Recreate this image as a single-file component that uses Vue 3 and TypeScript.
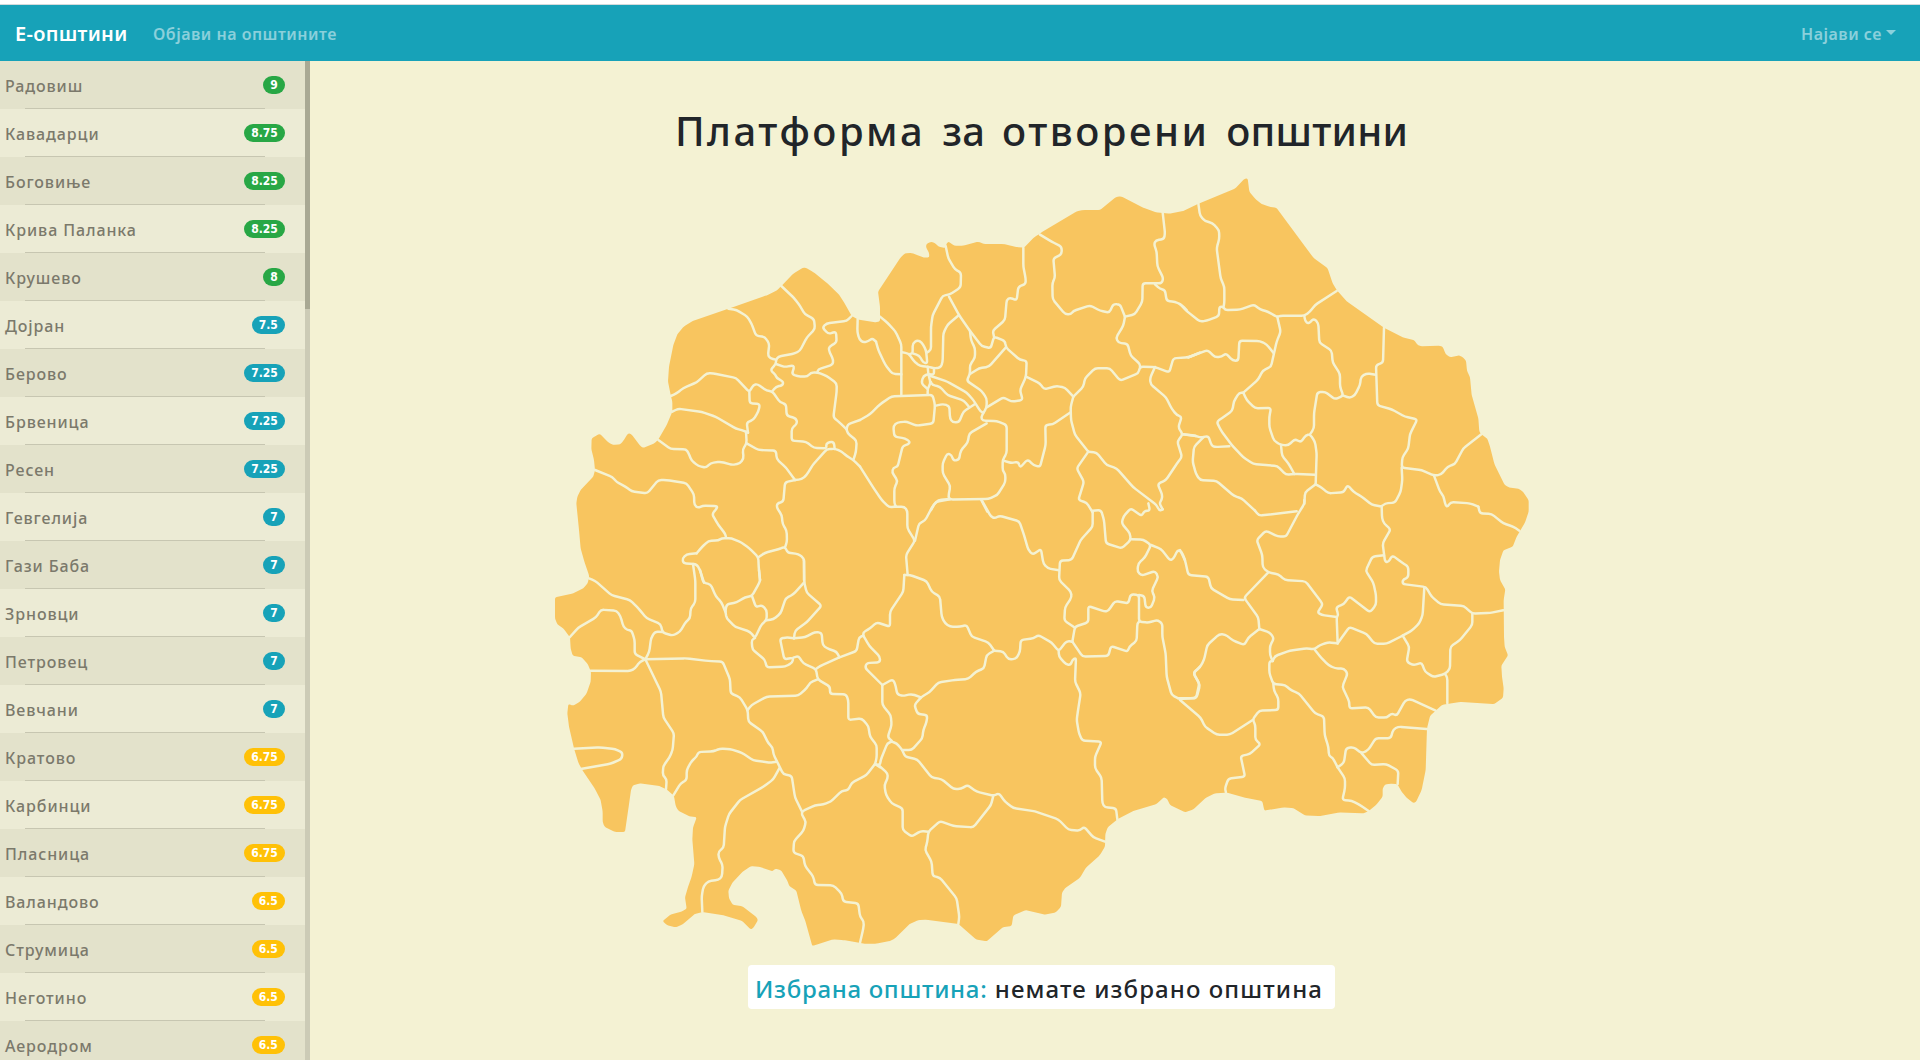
<script setup lang="ts">
interface Municipality {
  name: string
  score: number
}

interface Sheet {
  x: number
  y: number
  lines: string[]
}

const municipalities: Municipality[] = [
  { name: 'Радовиш', score: 9 },
  { name: 'Кавадарци', score: 8.75 },
  { name: 'Боговиње', score: 8.25 },
  { name: 'Крива Паланка', score: 8.25 },
  { name: 'Крушево', score: 8 },
  { name: 'Дојран', score: 7.5 },
  { name: 'Берово', score: 7.25 },
  { name: 'Брвеница', score: 7.25 },
  { name: 'Ресен', score: 7.25 },
  { name: 'Гевгелија', score: 7 },
  { name: 'Гази Баба', score: 7 },
  { name: 'Зрновци', score: 7 },
  { name: 'Петровец', score: 7 },
  { name: 'Вевчани', score: 7 },
  { name: 'Кратово', score: 6.75 },
  { name: 'Карбинци', score: 6.75 },
  { name: 'Пласница', score: 6.75 },
  { name: 'Валандово', score: 6.5 },
  { name: 'Струмица', score: 6.5 },
  { name: 'Неготино', score: 6.5 },
  { name: 'Аеродром', score: 6.5 },
]

function level(score: number): string {
  if (score >= 8) return 'success'
  if (score >= 7) return 'info'
  return 'warning'
}

// Map geometry is kept in sheets, each with its own origin, in thirds of a pixel.
type Point = [number, number]

function points(text: string, ox: number, oy: number): Point[] {
  return text.trim().split(/\s+/).map((pair) => {
    const [x, y] = pair.split(',').map(Number)
    return [x + ox, y + oy] as Point
  })
}

// Joins points with slightly rounded corners.
function toPath(pts: Point[], closed: boolean, radius: number): string {
  const n = pts.length
  const toward = (a: Point, b: Point): Point => {
    const d = Math.hypot(b[0] - a[0], b[1] - a[1]) || 1
    const t = Math.min(radius, d / 2) / d
    return [a[0] + (b[0] - a[0]) * t, a[1] + (b[1] - a[1]) * t]
  }
  const f = (p: Point): string => `${p[0].toFixed(1)} ${p[1].toFixed(1)}`
  let d = ''
  for (let i = 0; i < n; i++) {
    const p = pts[i]
    if (!closed && (i === 0 || i === n - 1)) {
      d += `${i === 0 ? 'M' : 'L'}${f(p)}`
      continue
    }
    const before = toward(p, pts[(i - 1 + n) % n])
    const after = toward(p, pts[(i + 1) % n])
    d += `${i === 0 ? 'M' : 'L'}${f(before)}Q${f(p)} ${f(after)}`
  }
  return closed ? d + 'Z' : d
}

const outlineParts: [number, number, string][] = [
  [1620, 1680, '45,112 100,100 130,85 143,70 147,52'],
  [1620, 720, '147,1005 133,965 122,925 117,870 109,790 112,770 122,750 160,710 165,690 162,660 154,627 155,595 179,581 205,607 220,615 240,613 250,603 262,583 268,579 276,585 300,617 310,624 345,609 355,598 380,555 397,515 397,485 392,465 384,425 387,380 400,315 412,283 432,259 460,242 565,206 680,166 710,152 728,134 760,101 788,84 797,83 820,96 860,128 898,165 915,192 935,228 953,238'],
  [2580, 510, '45,457 60,454 60,410 54,365 122,262 135,250 155,249 192,263 208,262 207,248 198,232 199,222 213,215 225,219 236,230 256,234 260,220 266,215 283,227 310,227 355,215 371,222 430,222 470,231 492,233 523,201 535,194 543,188 650,124 670,120 720,120 768,81 783,79 850,113 888,127 930,131 970,123'],
  [3540, 510, '58,100 165,56 194,26 203,25 208,65 225,86 245,102 267,110 289,113 400,263 443,295 458,340 470,360 500,394 612,473 668,502 702,510 712,524 722,529 780,527 788,530 797,552 810,562 838,556 850,563 858,572 861,602 870,622 875,675 895,745 898,785 904,793 922,806 930,830 943,882 974,945 988,953 1015,956 1027,963 1046,990'],
  [3540, 1440, '1046,95 1035,128 1010,170 998,200 970,211 960,240 957,275 960,300 976,328 971,360 972,470 974,500 984,526 964,557 966,590 971,625 969,653 943,672 840,666 787,674 750,708 741,745 737,870 725,930 708,966 700,969 680,953 665,935 652,912 630,911 615,914 608,925 608,950 590,973 566,993 550,1000 478,997 420,1008 375,1006 340,984 310,982 253,992 247,963 195,953 140,938 105,940 78,953 40,988 15,997'],
  [2580, 1440, '930,975 922,958 912,951 890,972 820,993 772,1018 743,1042 736,1062 735,1100 720,1125 678,1163 660,1193 615,1225 606,1238 603,1280 588,1297 555,1304 497,1290 460,1306 455,1338 428,1342 380,1384 348,1378 295,1332 200,1319 175,1320 148,1333 105,1375 90,1383 50,1391 15,1391'],
  [1620, 1680, '975,1151 910,1140 880,1138 817,1158 795,1080 784,1053 769,992 748,978 742,962 723,930 705,926 698,934 660,921 633,918 607,936 577,968 565,992 567,1015 578,1034 607,1039 648,1070 654,1080 640,1104 632,1108 607,1083 550,1066 487,1056 463,1063 428,1093 407,1102 380,1095 368,1083 393,1063 425,1055 440,1046 435,1012 445,978 455,950 463,912 457,838 459,803 470,772 448,769 415,752 407,738 402,708 380,688 358,678 298,670 278,677 273,690 266,740 255,816 225,816 193,800 188,785 188,755 182,720 165,687 127,630 115,608 102,565 87,500 82,460 85,432 100,437 120,425 140,400 152,365 153,335 143,312 125,292 98,287 92,265 90,232 70,205 52,193 45,175'],
]

const outline = toPath(outlineParts.flatMap(([x, y, t]) => points(t, x, y)), true, 5)

const sheets: Sheet[] = [
  {
    x: 1620,
    y: 720,
    lines: [
      '565,206 590,210 622,230 635,252 648,287 675,291 688,312 684,345 690,355 708,359',
      '724,138 763,175 780,198 795,223 822,237 825,267 800,293 780,332 765,340 715,350 708,359 708,372 691,390 707,405 710,414 730,425 728,436 708,440 697,454',
      '708,372 735,381 760,376 762,385 755,402 772,409 802,410 812,398 832,397 860,408 890,430 890,455 880,532 898,547 920,568',
      '832,397 835,388 878,374 880,360 866,330 868,320 890,307 888,275 865,282 847,262 860,250 920,243 935,228',
      '953,238 952,275 958,298 970,308 985,303 997,295 1008,305',
      '392,468 410,460 430,444 470,427 500,400 520,400 588,414 628,456 640,435 652,432 680,452 697,454 720,487 738,492 740,527 768,535 772,550 755,565 755,602 798,605 822,624 860,625 858,612 870,605 882,607 884,627',
      '628,456 629,490 660,492 655,515 640,540 620,547 624,578',
      '397,515 415,506 485,516 527,530 588,566 605,570 624,578',
      '618,575 620,610 608,628 611,655 600,670 577,675 542,665 512,669 498,683 475,678 455,662 445,638 438,628 392,627 355,600',
      '620,610 655,630 708,632 710,657 738,683 765,720',
      '765,720 735,727 730,785 712,790 710,802 725,825 728,852 740,872 741,905 735,922',
      '765,720 785,718 800,705 818,675 860,628 885,626 905,635 920,648 940,660 960,680',
      '920,568 923,553 960,540',
      '920,568 923,580 950,602 948,635 940,660',
      '165,690 217,711 230,726 257,740 275,754 322,760 355,720 380,720 440,730 462,763 463,795 474,804 488,797 532,798 530,806 516,822 535,855 556,882 558,892',
      '470,940 485,922 505,903 535,901 545,895 575,895 605,908 628,925 655,952 656,980 660,1020',
      '655,952 675,938 715,928 735,920 743,938 775,942 792,955 792,1020',
      '470,940 440,943 427,955 430,970 470,973 480,990 492,1028',
    ],
  },
  {
    x: 1620,
    y: 1680,
    lines: [
      '459,12 466,62 466,127 452,145 450,175 438,185 420,215 398,227 368,218 362,192 320,175 295,145 270,120 215,106 165,62 147,55',
      '368,216 345,215 333,235 328,275 316,298',
      '480,30 490,68 512,73 527,108 545,128 556,155',
      '660,60 658,68 636,108 615,112 590,127 560,133 556,155 560,175 585,200 630,215 645,234 665,192 680,181 680,150 665,135 648,142 636,108',
      '680,181 700,178 722,160 737,115 760,103 792,68',
      '792,0 793,68 800,98 845,137 800,187 765,212 762,235',
      '660,60 657,30',
      '762,235 740,232 720,236 727,270 733,298 760,293 757,308 735,320 680,322 675,300 637,268 635,240 645,234',
      '762,235 795,232 825,216 845,218 848,255 860,265 890,275 898,292',
      '760,293 775,288 790,310 828,327 833,358 870,380 870,402 918,403 925,420 925,480 965,475 985,498 990,530 1010,555 1010,595 1005,612',
      '828,327 840,318 898,292 950,273 957,232 970,227',
      '833,358 810,368 800,385 775,407 680,410 635,435 623,450',
      '316,298 440,295 505,303 548,305 570,358 572,400 600,412 623,450 625,485 668,515 685,550 698,562 700,582 730,643 755,647 765,712 785,753',
      '316,298 305,292 284,282 284,240 275,212 262,210 250,200 242,170 230,152 183,149 168,172 115,203 87,234',
      '316,298 300,305 285,325 272,333 152,332',
      '316,298 363,395 370,472 402,520 398,570 388,593 370,618 368,645 380,658 378,688',
      '102,566 180,562 225,567 248,578 245,597 212,611 122,627',
      '400,706 422,670 440,660 440,630 455,603 470,590 475,576 520,574 540,566 570,567 605,578 640,601 690,608 710,605',
      '718,625 700,658 672,679 600,720 567,762 555,800 551,863 535,875 536,893 548,915 546,950 535,960 505,963 490,980 485,1010 487,1056',
      '1005,612 980,645 935,668 925,690 905,693 872,725 850,733 825,736 787,753 785,763 798,785 790,813 762,843 760,878 790,888 795,918 820,950 825,975 880,976 905,1000 910,1025 955,1030 960,1070 972,1085 970,1105 960,1148',
      '1005,612 1020,622',
    ],
  },
  {
    x: 2580,
    y: 510,
    lines: [
      '48,515 55,540 75,583 97,612 124,613',
      '60,440 82,458 107,485 124,523 124,674',
      '0,750 30,733 60,703 95,679 218,675 225,705 220,760 170,767 140,755 112,757 100,768 103,800 135,805 150,815 145,823 128,828 113,890 100,893 96,907 113,932 103,955 103,1000 108,1010',
      '126,547 145,550 165,577 180,588 205,590 222,595 242,593 248,575 250,490 262,465 297,435',
      '150,552 158,550 158,520 172,510 185,517 198,540 202,580 190,578 178,557 158,550',
      '200,548 213,540 213,470 218,435 248,377 270,373 302,352 303,308 285,298 265,265 257,228',
      '267,380 297,435 330,483 365,528 392,535 402,500 435,513 438,533 480,570 500,572 498,620 480,660 488,690 455,695 430,682 380,712',
      '402,500 398,482 435,450 440,390 450,383 470,391 475,350 497,342 497,325 490,290 490,233',
      '330,483 333,510 345,535 345,563 330,585 330,612 320,632 365,663 380,685 380,712 363,742 368,752 410,753 440,765 440,850 428,870 428,902 436,912 436,937 412,975 385,987 270,989 265,980 271,948 248,910 248,880 262,850 275,855 280,872 297,870 302,842 323,818 328,790 380,760',
      '330,612 357,595 387,590 437,533',
      '203,590 205,612 212,640 203,655 203,672',
      '222,597 222,615 205,612 190,618 184,640 203,657',
      '212,618 262,635 320,668 340,690 362,725 370,728',
      '212,635 217,645 240,650 262,675 312,692 328,712',
      '345,702 310,725 297,757 278,757 270,745 268,708 250,702 228,707',
      '498,620 540,640 552,658 590,648 615,653 640,680',
      '640,680 670,650 675,625 705,595 750,595 780,632 835,610 840,590 885,591 928,607 940,565 985,562 1020,548',
      '640,680 632,710 633,750 645,795 685,845',
      '632,727 578,763 556,765 557,825 540,891 520,885 503,868 480,893 475,875 455,879 430,872',
      '885,591 870,625 872,643 918,682 935,716 950,735 965,740 955,772 968,793 952,815 966,860 950,882 918,930 893,942 907,975 905,990 898,1000 908,1018',
      '968,793 1008,798',
      '685,845 650,895 672,935 655,990 680,998 698,1027',
      '685,845 710,848 740,885 770,895 820,952 890,1005 898,1022 908,1018',
      '540,194 575,215 605,230 605,253 580,265 585,322 577,340 578,388 615,432 632,433 640,423 690,406 720,422 748,428 760,402 780,403 795,440',
      '795,440 825,433 847,395 848,340 905,340 910,325 892,288 890,245 882,222 888,211 912,207 915,190 908,127',
      '885,343 900,357 915,360 920,393 945,395 965,405 980,420',
      '795,440 790,467 768,503 775,518 803,522 812,557 840,582 840,592',
      '363,988 382,1025',
      '270,988 228,995 213,1020',
      '0,890 40,953 65,990 88,1012 103,1010',
    ],
  },
  {
    x: 3540,
    y: 510,
    lines: [
      '55,100 60,137 75,153 97,159 117,180 118,205 110,235 122,325 133,350 133,400 130,412',
      '0,402 20,423 60,455 80,452 117,438 118,410 130,410 135,420 180,419 222,404 240,418 263,425 292,441 300,437 373,437 390,425 405,405 470,363',
      '373,437 375,452 385,462 402,445 415,460 418,518 455,542 458,577 480,612 480,650 490,677 465,688 435,665 412,667 402,730 402,775 390,793',
      '490,677 510,684 525,675 540,645 543,620 560,610 587,614',
      '292,441 302,485 290,515 273,590 248,602 235,628 190,668',
      '25,562 83,540 105,562 125,560 138,550 158,572 175,572 178,512 240,513 260,523 280,548',
      '60,548 25,562',
      '190,668 178,668 162,693 157,722 135,738 110,755 122,780 155,825 190,862 220,882 292,888 318,914 343,912 405,914',
      '190,668 200,690 225,715 273,714 268,740 268,772 282,812 303,825 325,826 345,807 362,817 378,795 390,793 405,815 410,850 407,943',
      '303,825 306,857 325,880 343,912',
      '8,793 45,797 62,803 85,798 95,827 105,831 148,829',
      '70,802 42,830 38,875 48,912 60,930 110,933 162,978 185,985 225,1022',
      '407,943 375,967 373,1002',
      '407,943 425,953 445,970 490,967 503,945 520,965 545,980 575,1004 605,1010 615,1000 645,998 662,965 667,930 665,893',
      '612,473 609,578 588,585 592,706 635,718 675,740 712,748 690,792 685,835 667,862 665,893 725,900 762,917 783,914 803,890 825,882 850,835 904,793',
      '762,917 780,965 790,978 797,1007 803,1010 812,996 870,1000 895,1010',
    ],
  },
  {
    x: 3540,
    y: 1440,
    lines: [
      '605,78 606,115 612,130 632,148 608,190 615,245 625,247 637,226 665,247 685,260 685,292 668,300 668,312 738,321 755,350 782,373 852,378 877,401 930,399 970,391',
      '225,92 237,107 350,94',
      '373,60 373,72 355,100 318,170 293,169 257,152 230,180 247,225 248,262 265,277 295,283 315,300 377,304 427,370 425,380 412,397 425,405 470,411',
      '265,277 192,353 235,412 238,447',
      '0,210 15,240 25,285 85,290 93,325 150,358 190,360',
      '238,447 205,473 193,495 160,482 135,463 118,462 82,495 72,540 60,562 40,578 60,615 50,653 0,657',
      '0,660 62,713 75,740 110,764 150,764 218,720',
      '238,447 270,458 282,475 270,497 270,525 278,543',
      '278,543 268,545 268,580 280,612 315,615 335,632 357,640 405,700 432,710 434,765 445,800 447,828 458,833 473,862',
      '278,543 285,528 330,512 380,505 403,508 420,495 445,487 473,490',
      '403,508 425,535 445,555 465,565 492,566 503,580 487,620 508,665 508,685 565,682 587,712 620,713 635,700 650,707 675,662 690,657 767,692',
      '473,490 470,411 475,405 468,382 492,372 508,349 570,397 588,375 588,345 580,308 557,272 577,230 612,226',
      '473,490 508,441 560,462 583,491 620,491 668,467 695,452 718,430 728,405 733,322',
      '668,467 688,500 680,545 700,556 725,548 735,575 760,591 795,582 810,567 811,500 840,480 877,435 877,401',
      '795,582 802,592 802,670',
      '280,612 282,632 295,655 295,690 238,692 218,718 226,735 226,780 242,792 210,822 182,828 195,890 145,896 135,925 138,938',
      '473,862 492,848 498,805 520,801 545,820 565,810 587,775 632,775 640,748 655,740 740,747',
      '473,862 495,895 495,925 487,960 515,962 540,975 566,993',
      '545,820 575,855 618,852 655,872 653,912',
      '895,80 900,100 935,102 970,130 1000,140 1018,152',
    ],
  },
  {
    x: 2580,
    y: 1440,
    lines: [
      '10,467 10,457 30,445 50,427 90,440 90,395 130,335 133,285',
      '10,467 28,498 60,530 60,547 20,549 15,563 67,615',
      '103,80 133,80 142,92 142,145 165,182 138,225 143,285',
      '165,182 177,130 195,122 220,75 235,60 270,57',
      '365,60 393,110 405,115 418,107 478,124 492,165 505,210 518,224 543,207 550,250 563,265 597,271',
      '133,285 150,285 200,303 215,335 240,350 245,410 255,430 270,440 300,440 320,435 335,470 385,487 403,512',
      '403,512 430,515 445,538 468,537 480,515 482,480 520,475 535,465 575,488 596,513 620,483 637,485',
      '596,513 597,530 618,553 632,555 637,540 648,533 645,605 662,640 655,685 650,720 657,760 667,782 725,785 705,830 705,865 725,893 727,970 735,982 768,985 772,1018',
      '403,512 380,525 372,565 348,575 325,597 285,600 235,607 208,637 185,650 163,675 173,702 202,705 200,725 190,750 187,775 155,810 127,810',
      '67,615 98,598 105,610 112,643 128,648 155,642 183,652',
      '67,615 67,675 92,705 95,735 83,772 95,782',
      '95,785 110,790 127,810 135,830 172,838 215,893 245,897 280,927 303,927 322,915 350,935 400,947 417,940 435,965 460,984 525,994 595,1018 625,1049 660,1052 672,1040 700,1072 735,1085',
      '95,785 82,790 62,840 60,855 47,853',
      '55,855 83,880 83,895 73,915 78,945 95,970 128,985 128,1050 155,1070 182,1053 205,1055',
      '400,947 393,975 340,1042 280,1038 240,1023 205,1055 202,1085 195,1110 215,1145 218,1188 240,1193 290,1255 298,1310 295,1332',
      '698,97 698,140 662,180 635,240 600,242 597,300 633,335 635,352 615,382 613,422 645,443',
      '698,92 723,90 732,120 738,190 785,205 812,180 810,160 785,130 790,110 812,85 845,108 853,93 870,92 865,70',
      '812,178 850,179 873,195 855,232 835,250 832,275 845,287 885,273 895,290 875,333 885,352 873,383 857,383 853,348 837,345',
      '873,195 903,207 930,241 940,237 953,210 965,215 975,240',
      '637,485 645,440 685,427 685,378 735,395 745,392 765,363 805,370 812,343 837,345 837,425 865,428 892,420 907,430 907,470 917,520 920,590 935,645 955,655',
      '637,485 668,530 745,528 753,498 803,515 808,500 830,483 832,430 838,425',
      '955,655 1008,655 1018,610 1000,580 1020,560',
    ],
  },
]

const borders: string[] = sheets.flatMap((s) =>
  s.lines.map((line) => toPath(points(line, s.x, s.y), false, 9)),
)
</script>

<template>
  <div class="page">
    <nav class="navbar">
      <a class="brand">Е-општини</a>
      <a class="nav-link news">Објави на општините</a>
      <a class="nav-link login">Најави се<span class="caret"></span></a>
    </nav>
    <div class="content">
      <aside class="sidebar">
        <ul class="list">
          <li v-for="m in municipalities" :key="m.name" class="item">
            <span class="name">{{ m.name }}</span>
            <span class="badge" :class="level(m.score)">{{ m.score }}</span>
          </li>
        </ul>
        <div class="track"><div class="thumb"></div></div>
      </aside>
      <main class="main">
        <h1 class="title">Платформа <span class="tight">за</span> отворени <span class="tight">општини</span></h1>
        <svg class="map" viewBox="1650 510 2950 2340">
          <path class="land" :d="outline" />
          <path v-for="(d, i) in borders" :key="i" class="border" :d="d" />
        </svg>
        <div class="selected">
          <span class="label">Избрана општина:</span> немате избрано општина
        </div>
      </main>
    </div>
  </div>
</template>

<style>
body {
  background: #fff;
  overflow: hidden;
}
</style>

<style scoped>
.page {
  box-sizing: border-box;
  height: 1060px;
  padding-top: 4px;
  display: flex;
  flex-direction: column;
  font-family: "Noto Sans", "Open Sans", sans-serif;
  color: #212529;
}
.navbar {
  box-sizing: border-box;
  height: 57px;
  flex: none;
  display: flex;
  align-items: center;
  padding: 1px 24px 0 15px;
  background: #17a2b8;
  border-top: 1px solid #d3dadb;
  white-space: nowrap;
}
.brand {
  width: 138px;
  font-size: 20px;
  font-weight: 600;
  color: #fff;
  letter-spacing: 0.3px;
}
.nav-link {
  font-size: 16px;
  font-weight: 600;
  color: rgba(255, 255, 255, 0.5);
  letter-spacing: 0.5px;
}
.login {
  margin-left: auto;
  display: flex;
  align-items: center;
}
.caret {
  margin-left: 4px;
  margin-top: -2px;
  border: 5px solid transparent;
  border-top-color: currentColor;
  border-bottom: 0;
}
.content {
  flex: 1;
  min-height: 0;
  display: flex;
}
.sidebar {
  width: 310px;
  flex: none;
  display: flex;
  overflow: hidden;
}
.list {
  width: 305px;
  margin: 0;
  padding: 0;
  list-style: none;
}
.item {
  box-sizing: border-box;
  height: 48px;
  padding: 0 20px 0 5px;
  display: flex;
  justify-content: space-between;
  align-items: flex-start;
  background:
    linear-gradient(#c7c6b1, #c7c6b1) 25px 47px / 240px 1px no-repeat,
    #ecebd5;
}
.item:nth-child(odd) {
  background-color: #e3e2cb;
}
.name {
  font-size: 16px;
  line-height: 24px;
  margin-top: 13px;
  font-weight: 500;
  letter-spacing: 0.9px;
  color: #7b796b;
}
.badge {
  box-sizing: border-box;
  height: 18px;
  margin-top: 15px;
  padding: 0 7.2px;
  border-radius: 9px;
  font-family: "DejaVu Sans Condensed", "DejaVu Sans", sans-serif;
  font-stretch: condensed;
  font-size: 12px;
  line-height: 19px;
  font-weight: 700;
  color: #fff;
}
.success {
  background: #28a745;
}
.info {
  background: #17a2b8;
}
.warning {
  background: #ffc107;
}
.track {
  width: 5px;
  background: #cccbb6;
}
.thumb {
  height: 248px;
  background: #a9a994;
}
.main {
  flex: 1;
  min-width: 0;
  padding: 46px 147px 0 0;
  display: flex;
  flex-direction: column;
  align-items: center;
  background: #f4f2d3;
}
.title {
  margin: 0;
  font-size: 40px;
  line-height: 48px;
  font-weight: 500;
  letter-spacing: 2.5px;
  word-spacing: 4px;
  white-space: nowrap;
}
.tight {
  letter-spacing: 0.2px;
}
.map {
  width: 983.333px;
  height: 780px;
  margin-top: 15px;
  flex: none;
}
.land {
  fill: #f8c55f;
}
.border {
  fill: none;
  stroke: #f4f2d3;
  stroke-width: 7.4;
  stroke-linecap: round;
  stroke-linejoin: round;
}
.selected {
  box-sizing: border-box;
  width: 587px;
  height: 44px;
  margin-top: 15px;
  padding: 0 7px;
  border-radius: 4px;
  background: #fff;
  font-size: 24px;
  font-weight: 500;
  line-height: 47px;
  letter-spacing: 1.1px;
  white-space: nowrap;
}
.label {
  color: #17a2b8;
  letter-spacing: 0.7px;
}
</style>
